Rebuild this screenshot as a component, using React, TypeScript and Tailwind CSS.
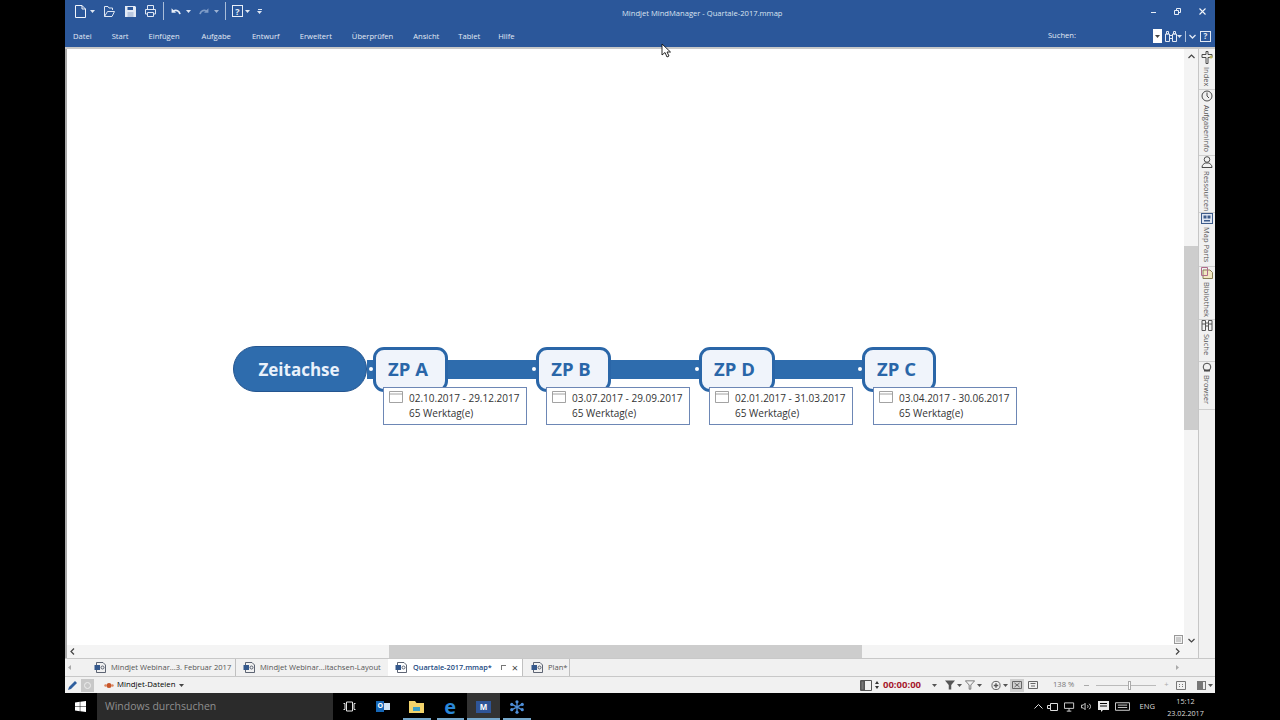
import React from "react";

const F = { fontFamily: '"Open Sans", "Noto Sans", sans-serif' };

const menu = ["Datei", "Start", "Einfügen", "Aufgabe", "Entwurf", "Erweitert", "Überprüfen", "Ansicht", "Tablet", "Hilfe"];
const menuGaps = ["mr-[20px]", "mr-[20px]", "mr-[22px]", "mr-[21px]", "mr-[20px]", "mr-[20px]", "mr-[20px]", "mr-[19px]", "mr-[18px]", ""];

const Caret = ({ c = "#dfe7f3" }: { c?: string }) => (
  <svg width="5" height="3" viewBox="0 0 5 3"><path d="M0 0h5L2.500 3z" fill={c} /></svg>
);

const Doc = () => (
  <svg width="11" height="13" viewBox="0 0 11 13" fill="none" stroke="#f1f5fb" strokeWidth="1"><path d="M.5.500h6.500l3.500 3.500v8.500H.5zM7 .5V4h3.500" /></svg>
);
const Open = () => (
  <svg width="11" height="12" viewBox="0 0 11 12" fill="none" stroke="#dfe7f3" strokeWidth="1"><path d="M.5 11.500V1.500h3.500l1 1.500h3.500v2M.5 11.500h7.500l2.500-5H3.500L.5 11.500" /></svg>
);
const Save = () => (
  <svg width="11" height="11" viewBox="0 0 11 11"><path d="M0 0h10l1 1v10H0z" fill="#e3eaf5" /><path d="M2.500 1h5.500v3H2.500z" fill="#2b579a" /><path d="M2.500 6h6v5h-6z" fill="#b9c8e0" /></svg>
);
const Print = () => (
  <svg width="11" height="12" viewBox="0 0 11 12" fill="none" stroke="#dfe7f3" strokeWidth="1"><path d="M2.500 4V.5h6V4M.5 4.500h10v4.500H8.500M2.500 9H.5V4.500M2.500 7.500h6v4h-6z" /></svg>
);
const Undo = ({ c }: { c: string }) => (
  <svg width="10" height="8" viewBox="0 0 11 9" fill="none" stroke={c} strokeWidth="2"><path d="M10 8C9 4 6 3 2.500 4.500" /><path d="M0.500 1.500v5h5z" fill={c} stroke="none" /></svg>
);
const Redo = ({ c }: { c: string }) => (
  <svg width="10" height="8" viewBox="0 0 11 9" fill="none" stroke={c} strokeWidth="2"><path d="M1 8C2 4 5 3 8.500 4.500" /><path d="M10.500 1.500v5h-5z" fill={c} stroke="none" /></svg>
);

const Cal = () => (
  <svg width="14" height="12" viewBox="0 0 14 12" fill="none" stroke="#8c8c8c" strokeWidth="0.8"><path d="M.5.500h13v11H.5zM.5 3h13" /></svg>
);

const MapDoc = () => (
  <svg className="shrink-0" width="12" height="11" viewBox="0 0 12 11" fill="none" stroke="#4d5565" strokeWidth="0.900"><path d="M2.500 3V.5h6.500l2.500 2.500v7.500h-9V8" /><rect x=".5" y="3" width="5.500" height="5" fill="#34588c" stroke="none" /><circle cx="8.500" cy="5.500" r="1.500" /></svg>
);

const nodes = [
  { n: "ZP A", x: 373, d: "02.10.2017 - 29.12.2017", bx: 383, w: "w-[75px]" },
  { n: "ZP B", x: 536, d: "03.07.2017 - 29.09.2017", bx: 546, w: "w-[75px]" },
  { n: "ZP D", x: 699, d: "02.01.2017 - 31.03.2017", bx: 709, w: "w-[76px]" },
  { n: "ZP C", x: 862, d: "03.04.2017 - 30.06.2017", bx: 873, w: "w-[74px]" },
];

const sideTabs = [
  { t: "Index", h: 39, i: "idx" },
  { t: "Aufgabeninfo", h: 66, i: "clock" },
  { t: "Ressourcen", h: 57, i: "person" },
  { t: "Map Parts", h: 54, i: "parts" },
  { t: "Bibliothek", h: 53, i: "lib" },
  { t: "Suche", h: 42, i: "bino" },
  { t: "Browser", h: 48, i: "globe" },
];

const SideIcon = ({ i }: { i: string }) => {
  const s = { fill: "none", stroke: "#4a4a4a", strokeWidth: 1 };
  if (i === "idx") return <svg width="12" height="13" viewBox="0 0 12 13" {...s}><path d="M5 .500h2v3h4v3H7v6H5v-6H1v-3h4z" /><circle cx="10" cy="6" r="1.500" fill="#b7b15a" stroke="none" /></svg>;
  if (i === "clock") return <svg width="12" height="12" viewBox="0 0 12 12" {...s}><circle cx="6" cy="6" r="5" /><path d="M6 2.500V6l2 2" /></svg>;
  if (i === "person") return <svg width="12" height="12" viewBox="0 0 12 12" {...s}><circle cx="6" cy="3.500" r="2.800" /><path d="M1 11.500c0-3 2-3.500 3-4.500h4c1 1 3 1.500 3 4.500z" /></svg>;
  if (i === "parts") return <svg width="12" height="11" viewBox="0 0 12 11"><rect x=".5" y=".5" width="11" height="10" fill="#dfe6f2" stroke="#3e5c8a" /><rect x="2.500" y="2.500" width="3" height="3" fill="#3e5c8a" /><rect x="6.500" y="2.500" width="3" height="3" fill="#3e5c8a" /><rect x="3" y="7" width="6" height="1.500" fill="#3e5c8a" /></svg>;
  if (i === "lib") return <svg width="12" height="12" viewBox="0 0 12 12" fill="none"><path d="M2 3h7l2.500 2.500v6H2z" fill="#f2e8c2" stroke="#8a7f55" /><path d="M.5.500h6v8h-6z" stroke="#b06a8a" /></svg>;
  if (i === "bino") return <svg width="12" height="11" viewBox="0 0 12 11" fill="none" stroke="#555"><path d="M1 .5h3.500v10H1zM7.500.5H11v10H7.500zM4.500 3h3v3h-3zM1 4h3.500M7.500 4H11" /></svg>;
  return <svg width="10" height="10" viewBox="0 0 10 10" {...s}><circle cx="5" cy="5" r="3.800" /><path d="M2 8.500h6" strokeWidth="2" /></svg>;
};

const Slot = ({ u, children }: { u?: boolean; children: React.ReactNode }) => (
  <div className="relative flex h-full w-[33.500px] items-center justify-center">
    {children}
    {u && <span className="absolute bottom-0 left-[3px] right-[3px] h-[2px] bg-[#76a8cc]" />}
  </div>
);

export default function App() {
  return (
    <div className="relative flex h-[720px] w-[1280px] flex-col overflow-hidden bg-black" style={F}>
      <div className="flex h-[693px] pl-[65px] pr-[65px]">
        <div className="flex w-[1150px] flex-col bg-[#f1f1f1]">
          {/* title bar */}
          <div className="relative flex h-[22px] items-center bg-[#2b579a] pl-[10px] pr-[9px] text-[#e9eff8]">
            <div className="flex items-center">
              <Doc />
              <span className="ml-[4px] mr-[9px]"><Caret /></span>
              <Open />
              <span className="ml-[10px]"><Save /></span>
              <span className="ml-[9px]"><Print /></span>
              <span className="ml-[7px] mr-[7px] h-[18px] w-px bg-[#a9bdd9]" />
              <Undo c="#e9eff8" />
              <span className="ml-[5px] mr-[8px]"><Caret /></span>
              <Redo c="#7f9cc7" />
              <span className="ml-[5px] mr-[6px]"><Caret c="#9db3d4" /></span>
              <span className="mr-[6px] h-[18px] w-px bg-[#a9bdd9]" />
              <span className="flex h-[12px] w-[11px] items-center justify-center border border-[#e9eff8] text-[9px] font-bold leading-none">?</span>
              <span className="ml-[2px] mr-[7px]"><Caret /></span>
              <span className="flex flex-col items-center gap-[1px]"><span className="h-px w-[4px] bg-[#dfe7f3]" /><Caret /></span>
            </div>
            <div className="absolute left-[557px] top-[5px] whitespace-nowrap text-[7.600px] leading-[16px] text-[#dbe4f1]">Mindjet MindManager - Quartale-2017.mmap</div>
            <div className="ml-auto flex items-center gap-[18px]">
              <span className="mt-[2px] h-px w-[5px] bg-[#e9eff8]" />
              <svg width="7" height="7" viewBox="0 0 7 7" fill="none" stroke="#e9eff8"><path d="M.5 2.500h4v4h-4zM2.500 2.500v-2h4v4h-2" /></svg>
              <svg width="7" height="7" viewBox="0 0 7 7" stroke="#f3f6fb" strokeWidth="1.100"><path d="M.5.500l6 6M6.500.500l-6 6" /></svg>
            </div>
          </div>
          {/* menu bar */}
          <div className="relative flex h-[25px] items-center bg-[#2b579a] pr-[4px] pt-[3px] text-[7.600px] text-[#e3eaf5]">
            <div className="flex items-center pl-[8px] pt-[1px]">
              {menu.map((t, k) => (
                <span key={t} className={menuGaps[k]}>{t}</span>
              ))}
            </div>
            <span className="ml-auto mr-[77px]">Suchen:</span>
            <span className="flex h-[14px] w-[9px] items-center justify-center bg-white"><Caret c="#444" /></span>
            <span className="ml-[3px]">
              <svg width="12" height="11" viewBox="0 0 12 11" fill="none" stroke="#e3eaf5"><path d="M.5 3h4v7.500h-4zM7.500 3h4v7.500h-4zM4.500 4.500h3v3h-3zM1.500.5h2v2.500h-2zM8.500.5h2v2.500h-2z" /></svg>
            </span>
            <span className="mr-[3px]"><Caret /></span>
            <span className="mr-[3px] h-[11px] w-px bg-[#a9bdd9]" />
            <svg width="7" height="5" viewBox="0 0 7 5" fill="none" stroke="#e3eaf5" strokeWidth="1.300"><path d="M.5 1l3 3 3-3" /></svg>
            <span className="ml-[4px] flex h-[11px] w-[11px] items-center justify-center border border-[#e3eaf5] text-[8px] font-bold leading-none">?</span>
          </div>
          {/* content */}
          <div className="flex min-h-0 flex-1 border-t-2 border-[#c8c8c8]">
            <div className="flex min-w-0 flex-1 flex-col">
              <div className="flex min-h-0 flex-1">
                <div className="relative w-[1119px] border-l-2 border-[#a8a8a8] bg-white">
                  <div className="absolute left-[300px] top-[311px] h-[19px] w-[520px] bg-[#2e6cad]" />
                  <div className="absolute left-[166px] top-[297px] flex h-[46px] w-[134px] items-center justify-center rounded-[23px] border border-[#24558f] bg-[#2e6cad] pr-[2px] pt-[1px] text-[17px] font-bold text-[#e9f1fb]">Zeitachse</div>
                  {nodes.map((n) => (
                    <React.Fragment key={n.n}>
                      <div className={"absolute top-[298px] flex h-[45px] items-center justify-center rounded-[11px] border-[3px] border-[#2a66a8] bg-[#f0f4fb] pb-[1px] pr-[5px] text-[18.500px] font-bold text-[#2a66a8] " + n.w} style={{ left: n.x - 67 }}>{n.n}</div>
                      <div className="absolute top-[318px] h-[4px] w-[4px] rounded-full bg-white" style={{ left: n.x - 71 }} />
                      <div className="absolute top-[338px] flex h-[38px] w-[144px] border border-[#6d87b5] bg-white pl-[5px] pt-[3px] text-[10px] leading-[15px] text-[#333]" style={{ left: n.bx - 67 }}>
                        <span className="mr-[6px]"><Cal /></span>
                        <span className="whitespace-nowrap">{n.d}<br />65 Werktag(e)</span>
                      </div>
                    </React.Fragment>
                  ))}
                  <span className="absolute bottom-[1px] right-[1px] flex h-[9px] w-[9px] items-center justify-center border border-[#999] bg-[#f1f1f1]"><span className="h-[5px] w-[5px] bg-[#ccc]" /></span>
                </div>
                {/* vertical scrollbar */}
                <div className="flex w-[14px] flex-col items-center bg-[#f4f4f4]">
                  <svg className="mt-[5px]" width="7" height="5" viewBox="0 0 7 5" fill="none" stroke="#444" strokeWidth="1.200"><path d="M.5 4l3-3 3 3" /></svg>
                  <div className="mt-[187px] h-[184px] w-full bg-[#cdcdcd]" />
                  <div className="flex-1" />
                  <div className="mb-[2px] flex items-center">
                    <svg width="7" height="5" viewBox="0 0 7 5" fill="none" stroke="#444" strokeWidth="1.200"><path d="M.5 1l3 3 3-3" /></svg>
                  </div>
                </div>
              </div>
              {/* horizontal scrollbar */}
              <div className="flex h-[13px] items-center border-l-2 border-[#a8a8a8] bg-[#f4f4f4]">
                <svg className="ml-[3px]" width="5" height="7" viewBox="0 0 5 7" fill="none" stroke="#444" strokeWidth="1.200"><path d="M4 .5l-3 3 3 3" /></svg>
                <div className="ml-[314px] h-full w-[473px] bg-[#cdcdcd]" />
                <svg className="ml-[313px]" width="5" height="7" viewBox="0 0 5 7" fill="none" stroke="#444" strokeWidth="1.200"><path d="M1 .5l3 3-3 3" /></svg>
              </div>
            </div>
            {/* right side tabs */}
            <div className="flex w-[17px] flex-col border-l border-[#c6c6c6] bg-[#f1f1f1] pt-[2px] text-[#555]">
              {sideTabs.map((s) => (
                <div key={s.t} className="flex flex-col items-center overflow-hidden border-b border-[#cfcfcf]" style={{ height: s.h }}>
                  <SideIcon i={s.i} />
                  <span className="mt-[3px] whitespace-nowrap text-[7.500px] leading-[10px] [writing-mode:vertical-rl]">{s.t}</span>
                </div>
              ))}
            </div>
          </div>
          {/* tabs */}
          <div className="flex h-[18px] items-center whitespace-nowrap border-t border-[#c8c8c8] bg-[#f1f1f1] pl-[3px] text-[7.600px] text-[#555]">
            <svg width="3" height="5" viewBox="0 0 3 5"><path d="M3 0v5L0 2.500z" fill="#aaa" /></svg>
            <div className="ml-[23px] flex h-full w-[142px] items-center gap-[5px] border-r border-[#c0c0c0]"><MapDoc />Mindjet Webinar...3. Februar 2017</div>
            <div className="ml-[7px] flex h-full w-[145px] items-center gap-[5px]"><MapDoc />Mindjet Webinar...itachsen-Layout</div>
            <div className="flex h-full w-[134px] items-center gap-[6px] bg-white pl-[7px] text-[7.300px] font-semibold text-[#22497f]">
              <MapDoc />Quartale-2017.mmap*
              <span className="ml-[3px] h-[5px] w-[5px] border-l border-t border-[#777]" />
              <span className="text-[11px] font-normal leading-none text-[#444]">×</span>
            </div>
            <div className="flex h-full w-[48px] items-center gap-[5px] border-x border-[#c0c0c0] pl-[8px]"><MapDoc />Plan*</div>
            <svg className="ml-[606px]" width="3" height="5" viewBox="0 0 3 5"><path d="M0 0v5L3 2.500z" fill="#aaa" /></svg>
          </div>
          {/* status bar */}
          <div className="flex h-[17px] items-center whitespace-nowrap border-t border-[#c8c8c8] bg-[#f1f1f1] pl-[2px] text-[7.600px] text-[#333]">
            <svg width="11" height="11" viewBox="0 0 11 11"><path d="M1 10l1-3 6-6 2 2-6 6z" fill="#2f5f9e" /></svg>
            <span className="ml-[3px] flex h-[13px] w-[13px] items-center justify-center bg-[#c8c8c8]"><span className="h-[7px] w-[7px] rounded-full border border-[#eee]" /></span>
            <svg className="ml-[10px]" width="10" height="7" viewBox="0 0 10 7"><circle cx="5" cy="3.500" r="2.500" fill="#c8562a" /><circle cx="1.500" cy="3.500" r="1.200" fill="#d9855f" /><circle cx="8.500" cy="3.500" r="1.200" fill="#d9855f" /></svg>
            <span className="ml-[3px] text-[7.800px] text-black">Mindjet-Dateien</span>
            <span className="ml-[4px]"><Caret c="#444" /></span>
            <div className="absolute left-[860px] flex items-center">
              <svg width="12" height="11" viewBox="0 0 12 11" fill="none" stroke="#555"><path d="M.5.500h11v10H.5zM4.500.500v10" /><path d="M1 1h3v9H1z" fill="#777" /></svg>
              <span className="ml-[3px] mr-[4px] flex flex-col gap-[2px]"><svg width="4" height="3" viewBox="0 0 4 3"><path d="M2 0l2 3H0z" fill="#333" /></svg><svg width="4" height="3" viewBox="0 0 4 3"><path d="M0 0h4L2 3z" fill="#333" /></svg></span>
              <span className="text-[9.500px] font-bold text-[#a6192e]">00:00:00</span>
              <span className="ml-[11px]"><Caret c="#555" /></span>
              <svg className="ml-[8px]" width="10" height="10" viewBox="0 0 12 11"><path d="M0 0h12L7.500 5.500V11h-3V5.500z" fill="#555" /></svg>
              <span className="ml-[2px]"><Caret c="#555" /></span>
              <svg className="ml-[3px]" width="10" height="10" viewBox="0 0 12 11" fill="none" stroke="#666"><path d="M.5.500h11L7 5.500v5H5v-5z" /></svg>
              <span className="ml-[2px]"><Caret c="#555" /></span>
              <svg className="ml-[9px]" width="10" height="10" viewBox="0 0 11 11" fill="none" stroke="#555"><circle cx="5.500" cy="6" r="4.500" /><path d="M3 6h5M5.500 3.500v5" strokeWidth="1.500" /></svg>
              <span className="ml-[2px]"><Caret c="#555" /></span>
              <span className="ml-[2px] flex h-[13px] w-[14px] items-center justify-center bg-[#cfcfcf]"><svg width="10" height="8" viewBox="0 0 10 8" fill="none" stroke="#666"><path d="M.5.500h9v7h-9zM2.500 2l5 4M7.500 2l-5 4" /></svg></span>
              <svg className="ml-[4px]" width="10" height="8" viewBox="0 0 10 8" fill="none" stroke="#666"><path d="M.5.500h9v7h-9zM2.500 2.500h5M3 5h4" /></svg>
              <span className="ml-[15px] text-[#777]">138 %</span>
              <span className="ml-[10px] h-px w-[5px] bg-[#aaa]" />
              <span className="relative ml-[7px] h-px w-[60px] bg-[#bbb]"><span className="absolute left-[32px] top-[-4px] h-[9px] w-[3px] border border-[#aaa] bg-white" /></span>
              <span className="ml-[8px] leading-none text-[#aaa]">+</span>
              <svg className="ml-[7px]" width="10" height="9" viewBox="0 0 10 9" fill="none" stroke="#777"><path d="M.5.500h9v8h-9z" /><path d="M3 3l1 1M7 3L6 4M3 6l1-1M7 6L6 5" /></svg>
              <svg className="ml-[11px]" width="9" height="9" viewBox="0 0 9 9"><rect width="9" height="9" fill="#777" /><rect x="6" y="1" width="2" height="7" fill="#eee" /></svg>
              <span className="ml-[2px]"><Caret c="#555" /></span>
            </div>
          </div>
        </div>
      </div>
      {/* taskbar */}
      <div className="flex h-[27px] items-center bg-black text-[#bdbdbd]">
        <div className="flex w-[97px] justify-start pl-[75px]">
          <svg width="11" height="11" viewBox="0 0 11 11" fill="#fff"><path d="M0 1.500l4.800-.7v4.400H0zM5.300.7L11 0v5.200H5.300zM0 5.800h4.800v4.400L0 9.500zM5.300 5.800H11V11l-5.700-.8z" /></svg>
        </div>
        <div className="flex h-full w-[236px] items-center bg-[#2b2b2b] pl-[8px] text-[10.500px] text-[#8f8f8f]">Windows durchsuchen</div>
        <div className="flex h-full items-center">
          <Slot><svg width="13" height="11" viewBox="0 0 13 11" fill="none" stroke="#e5e5e5"><path d="M3.500 1h6v9h-6zM.5 2.500h1.500v6H.5M12.500 2.500H11v6h1.500" /></svg></Slot>
          <Slot><span className="flex items-center"><span className="flex h-[11px] w-[8px] items-center justify-center bg-[#1667b7] text-[7px] font-bold text-white">O</span><span className="h-[7px] w-[6px] bg-[#cfe3f5]" /></span></Slot>
          <Slot u><svg width="15" height="12" viewBox="0 0 15 12"><path d="M0 0h6l1.500 2H15v10H0z" fill="#f2d36b" /><rect x="4" y="6" width="7" height="4" fill="#3aa0c9" /></svg></Slot>
          <Slot u><span className="text-[20px] font-bold leading-none text-[#2b88d8]">e</span></Slot>
          <div className="relative flex h-full w-[33px] items-center justify-center bg-[#333]"><span className="flex h-[12px] w-[15px] items-center justify-center bg-[#2f5597] text-[8px] font-bold text-white">M</span><span className="absolute bottom-0 left-0 right-0 h-[2px] bg-[#76a8cc]" /></div>
          <Slot u><svg width="14" height="14" viewBox="0 0 16 16" stroke="#4f8fd9" strokeWidth="1.500"><path d="M8 1v14M1.500 4.500l13 7M14.500 4.500l-13 7" /><g fill="#4f8fd9" stroke="none"><circle cx="8" cy="2" r="1.800" /><circle cx="8" cy="14" r="1.800" /><circle cx="2" cy="5" r="1.800" /><circle cx="14" cy="5" r="1.800" /><circle cx="2" cy="11" r="1.800" /><circle cx="14" cy="11" r="1.800" /></g></svg></Slot>
        </div>
        <div className="ml-auto flex items-center pr-[76px] text-[#dcdcdc]">
          <svg width="9" height="5" viewBox="0 0 9 5" fill="none" stroke="#ddd"><path d="M.5 4.500l4-4 4 4" /></svg>
          <svg className="ml-[4px]" width="11" height="8" viewBox="0 0 11 8" fill="none" stroke="#ddd"><path d="M3.500.5h7v7h-7zM.5 2.500h3v3h-3z" /></svg>
          <svg className="ml-[6px]" width="11" height="10" viewBox="0 0 12 10" fill="none" stroke="#ddd"><path d="M.5.500h10v6h-10zM5.500 6.500v3M3 9.500h5" /></svg>
          <svg className="ml-[6px]" width="10" height="9" viewBox="0 0 11 9" fill="none" stroke="#ddd"><path d="M.5 3h2l2-2v7l-2-2h-2zM7 3c1 1 1 2 0 3M9 1.500c2 2 2 4 0 6" /></svg>
          <svg className="ml-[7px]" width="11" height="11" viewBox="0 0 11 11"><path d="M0 0h11v9H5l-2 2V9H0z" fill="#e8e8e8" /><path d="M2 2.500h7M2 5h7" stroke="#000" /></svg>
          <svg className="ml-[6px]" width="15" height="9" viewBox="0 0 16 9" fill="none" stroke="#ddd"><path d="M.5.500h15v8H.5zM3 3h10M3 5.500h10" /></svg>
          <span className="ml-[10px] text-[7.600px]">ENG</span>
          <div className="ml-[12px] w-[37px] whitespace-nowrap text-center text-[7.200px] leading-[12px]"><div>15:12</div><div>23.02.2017</div></div>
        </div>
      </div>
      <svg className="absolute left-[661px] top-[43px]" width="10" height="15" viewBox="0 0 10 15"><path d="M1 1v11l3-2.500L6 14l2-1-2-4h3.500z" fill="#fff" stroke="#111" strokeWidth="0.900" /></svg>
    </div>
  );
}
